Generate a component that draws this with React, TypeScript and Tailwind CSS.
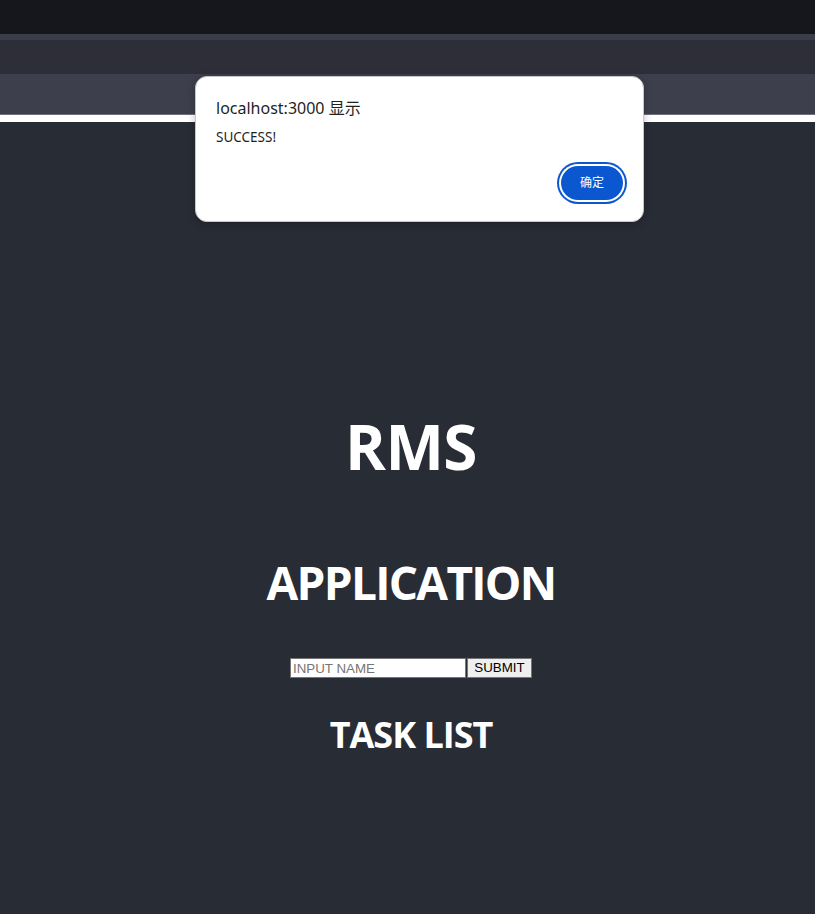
import { useState } from "react";

export default function App() {
  const [name, setName] = useState("");

  return (
    <div className="relative flex min-h-[914px] flex-col font-['Open_Sans',sans-serif]">
      {/* browser chrome */}
      <div className="h-[34px] bg-[#16171d]" />
      <div className="h-[6px] bg-[#3c3d4a]" />
      <div className="h-[34px] bg-[#2d2e38]" />
      <div className="h-[40px] bg-[#3d3f4d]" />
      <div className="h-px bg-[#6f7076]" />
      <div className="h-[7px] bg-white" />

      {/* page */}
      <main className="flex flex-1 flex-col items-center bg-[#282c34] pl-[7px] text-white">
        <h1 className="mt-[293px] text-[62px] font-bold leading-none tracking-[-0.5px]">RMS</h1>
        <h2 className="mt-[82px] text-[46px] font-bold leading-none tracking-[-1.7px]">APPLICATION</h2>

        <div className="mt-[53px] flex font-['Liberation_Sans',Arial,sans-serif] text-[13.33px]">
          <input
            type="text"
            placeholder="INPUT NAME"
            value={name}
            onChange={(e) => setName(e.target.value)}
            className="h-[20px] w-[176px] border border-[#767676] bg-white px-[2px] text-black outline-none placeholder:text-[#757575]"
          />
          <button className="ml-px h-[20px] w-[65px] border border-[#767676] bg-[#efefef] px-[6px] leading-none text-black">
            SUBMIT
          </button>
        </div>

        <h2 className="mt-[39px] text-[36px] font-bold leading-none tracking-[-1px]">TASK LIST</h2>
      </main>

      {/* alert dialog */}
      <div className="absolute left-[195px] top-[76px] flex h-[146px] w-[449px] flex-col rounded-[12px] border border-[#c7c7c7] bg-white px-[20px] pt-[19px] shadow-[0_2px_8px_rgba(0,0,0,0.25)] font-['Noto_Sans','Noto_Sans_CJK_SC',sans-serif]">
        <div className="text-[16px] leading-[24px] text-[#1f1f1f]">localhost:3000 显示</div>
        <div className="mt-[8px] text-[13.5px] leading-[18px] text-[#1f1f1f]">SUCCESS!</div>
        <div className="mt-[20px] flex justify-end">
          <button className="flex h-[34px] w-[62px] items-center justify-center rounded-full bg-[#0b57d0] text-[12px] text-white ring-2 ring-[#0b57d0] ring-offset-2 ring-offset-white">
            确定
          </button>
        </div>
      </div>
    </div>
  );
}
